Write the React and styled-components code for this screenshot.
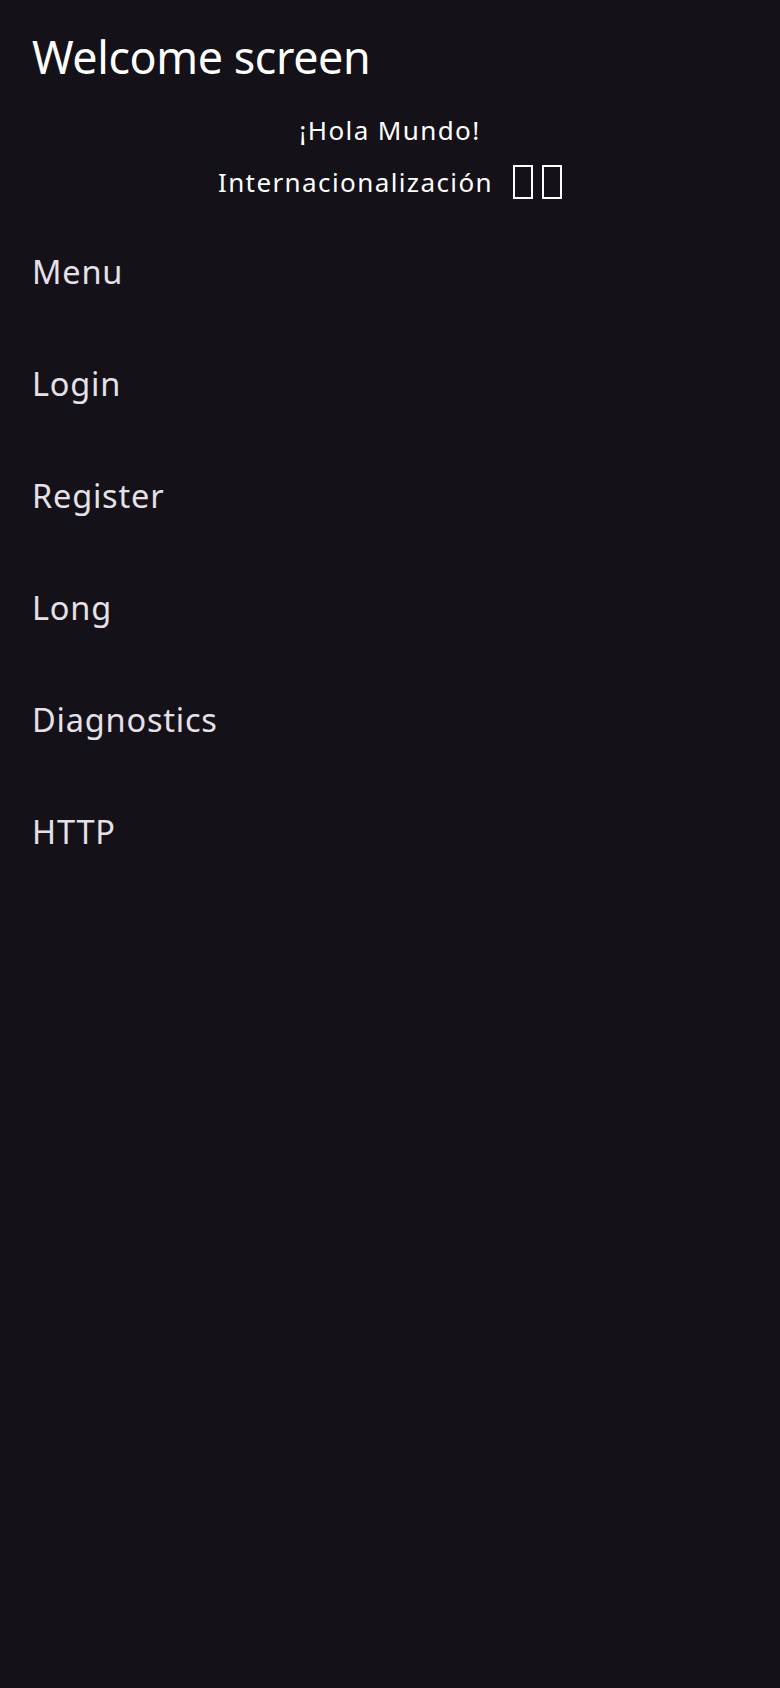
import React from "react";
import styled, { createGlobalStyle } from "styled-components";

const GlobalStyle = createGlobalStyle`
  html, body {
    margin: 0;
    padding: 0;
    background-color: #141218;
  }
  body {
    font-family: "Noto Sans", "Open Sans", sans-serif;
  }
`;

const Screen = styled.div`
  min-height: 1688px;
  background-color: #141218;
  display: flex;
  flex-direction: column;
`;

const Header = styled.header`
  padding: 30px 32px 0;
`;

const Title = styled.h1`
  margin: 0;
  font-size: 44.8px;
  line-height: 1.2;
  font-weight: 400;
  letter-spacing: -0.4px;
  color: #ffffff;
`;

const Greeting = styled.section`
  display: flex;
  flex-direction: column;
  align-items: center;
  padding-top: 28px;
  gap: 16px;
`;

const GreetingText = styled.div`
  font-size: 26px;
  line-height: 1.4;
  letter-spacing: 1.4px;
  color: #ffffff;
`;

const LangRow = styled.div`
  display: flex;
  align-items: center;
  gap: 20px;
`;

const Flags = styled.div`
  display: flex;
  gap: 9px;
`;

// missing glyph boxes where the flag emoji would be
const Tofu = styled.span`
  display: block;
  width: 20px;
  height: 34px;
  box-sizing: border-box;
  border: 2.5px solid #ffffff;
`;

const MenuList = styled.nav`
  display: flex;
  flex-direction: column;
  padding-top: 15px;
`;

const MenuItem = styled.a`
  display: flex;
  align-items: center;
  height: 112px;
  padding: 0 32px;
  font-size: 32.5px;
  line-height: 1.4;
  letter-spacing: 0.8px;
  color: #e6e0e9;
  text-decoration: none;
  cursor: pointer;
`;

const items = ["Menu", "Login", "Register", "Long", "Diagnostics", "HTTP"];

const App = () => {
  return (
    <Screen>
      <GlobalStyle />
      <Header>
        <Title>Welcome screen</Title>
      </Header>
      <Greeting>
        <GreetingText>¡Hola Mundo!</GreetingText>
        <LangRow>
          <GreetingText>Internacionalización</GreetingText>
          <Flags>
            <Tofu />
            <Tofu />
          </Flags>
        </LangRow>
      </Greeting>
      <MenuList>
        {items.map((item) => (
          <MenuItem key={item}>{item}</MenuItem>
        ))}
      </MenuList>
    </Screen>
  );
};

export default App;
